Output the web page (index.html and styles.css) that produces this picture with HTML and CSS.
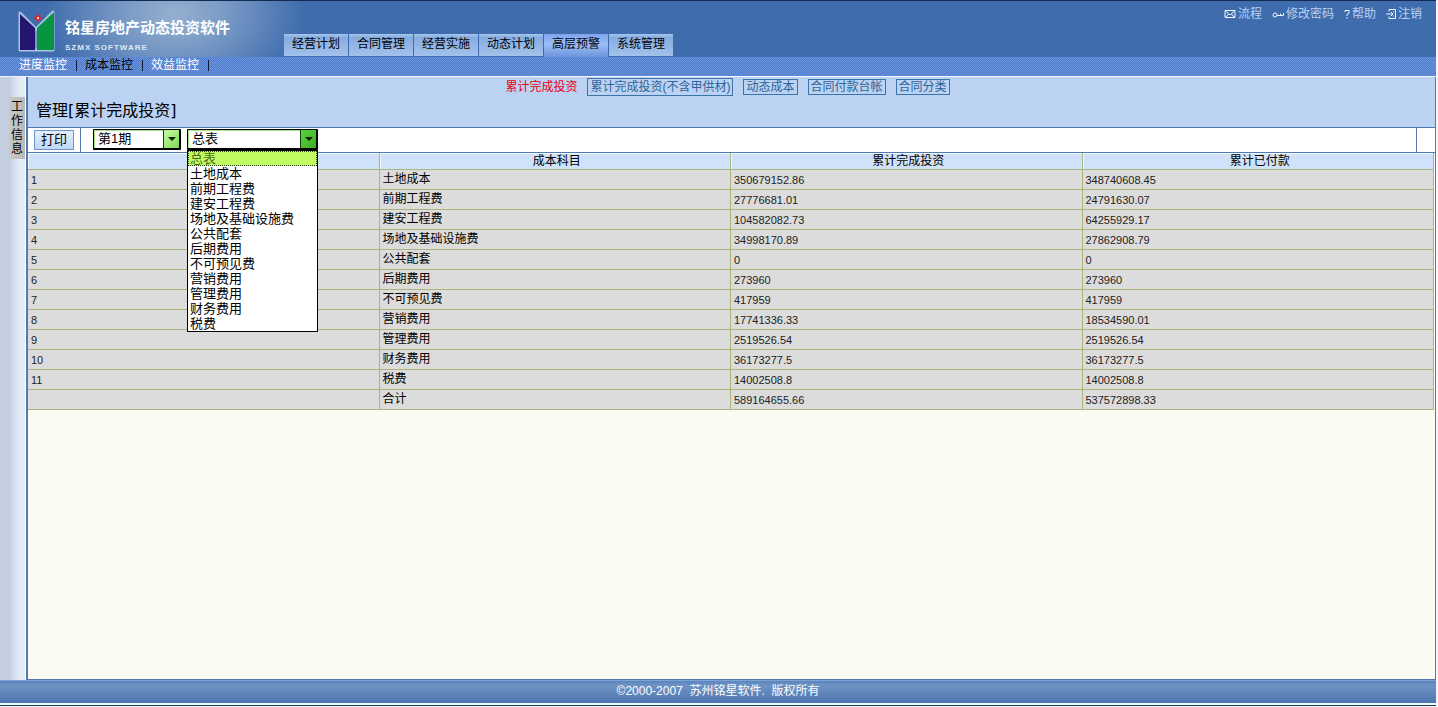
FILE: index.html
```html
<!DOCTYPE html>
<html lang="zh-CN">
<head>
<meta charset="utf-8">
<title>铭星房地产动态投资软件</title>
<link rel="stylesheet" href="styles.css">
</head>
<body>
<div class="page">
  <header class="header">
    <div class="brand">
      <svg class="logo" viewBox="0 0 42 44" aria-hidden="true">
        <path class="logo-glow" d="M4 5 20 21 37 4V42H4Z"/>
        <path fill="#26156f" d="M4 6 19 20V42H4Z"/>
        <path fill="#079541" d="M38 4V42H21V20Z"/>
        <path stroke="#a9c4e6" stroke-width="1" d="M20 20V42"/>
        <path fill="#e5202a" d="M22 5 23.500 8.500 27 10 23.500 11.500 22 15 20.500 11.500 17 10 20.500 8.500Z"/>
        <circle cx="22" cy="10" r="1" fill="#fff"/>
      </svg>
      <div class="brand-text">
        <h1 class="brand-name">铭星房地产动态投资软件</h1>
        <p class="brand-sub">SZMX SOFTWARE</p>
      </div>
    </div>
    <nav class="tabs">
      <a class="tab" href="#">经营计划</a>
      <a class="tab" href="#">合同管理</a>
      <a class="tab" href="#">经营实施</a>
      <a class="tab" href="#">动态计划</a>
      <a class="tab tab-active" href="#">高层预警</a>
      <a class="tab" href="#">系统管理</a>
    </nav>
    <div class="tools">
      <a class="tool" href="#"><svg class="icon" viewBox="0 0 12 10"><path d="M1 1.500H11V8.500H1ZM1.500 2 6 6 10.500 2M1.500 8.500 4.500 5M10.500 8.500 7.500 5"/></svg>流程</a>
      <a class="tool" href="#"><svg class="icon" viewBox="0 0 12 10"><path d="M1 6a2 2 0 1 0 4 0a2 2 0 1 0-4 0M5 6.500H11.500V4M8.500 6.500V4.500"/></svg>修改密码</a>
      <a class="tool" href="#"><svg class="icon icon-narrow" viewBox="0 0 6 10"><path d="M1 3V1.500H5V4L3 5.500V7M3 8V9.500"/></svg>帮助</a>
      <a class="tool" href="#"><svg class="icon icon-mid" viewBox="0 0 10 10"><path d="M3 2.500V.5H9.500V9.500H3V7.500M0 5H7M5 3 7 5 5 7M7.500 2.500V3.500M7.500 6.500V7.500"/></svg>注销</a>
    </div>
  </header>
  <nav class="subnav">
    <a class="subnav-link" href="#">进度监控</a>
    <a class="subnav-link subnav-active" href="#">成本监控</a>
    <a class="subnav-link" href="#">效益监控</a>
  </nav>
  <div class="body">
    <aside class="side"><button class="side-tab" type="button">工作信息</button></aside>
    <main class="main">
      <div class="heading">
        <nav class="views">
          <a class="view view-active" href="#">累计完成投资</a>
          <a class="view view-tall" href="#">累计完成投资(不含甲供材)</a>
          <a class="view" href="#">动态成本</a>
          <a class="view" href="#">合同付款台帐</a>
          <a class="view" href="#">合同分类</a>
        </nav>
        <h2 class="title">管理[累计完成投资]</h2>
      </div>
      <div class="toolbar">
        <div class="print-cell"><button class="print" type="button">打印</button></div>
        <div class="filters">
          <div class="combo combo-period">
            <select class="combo-select" aria-label="期次"><option>第1期</option></select>
            <span class="arrow"></span>
          </div>
          <div class="combo combo-subject">
            <select class="combo-select" aria-label="报表"><option>总表</option></select>
            <span class="arrow arrow-open"></span>
            <select class="list" size="12" aria-label="报表选项">
              <option selected>总表</option>
              <option>土地成本</option>
              <option>前期工程费</option>
              <option>建安工程费</option>
              <option>场地及基础设施费</option>
              <option>公共配套</option>
              <option>后期费用</option>
              <option>不可预见费</option>
              <option>营销费用</option>
              <option>管理费用</option>
              <option>财务费用</option>
              <option>税费</option>
            </select>
          </div>
        </div>
        <div class="toolbar-end"></div>
      </div>
      <table class="grid">
        <thead>
          <tr><th></th><th>成本科目</th><th>累计完成投资</th><th>累计已付款</th></tr>
        </thead>
        <tbody>
          <tr><td class="num">1</td><td>土地成本</td><td class="num">350679152.86</td><td class="num">348740608.45</td></tr>
          <tr><td class="num">2</td><td>前期工程费</td><td class="num">27776681.01</td><td class="num">24791630.07</td></tr>
          <tr><td class="num">3</td><td>建安工程费</td><td class="num">104582082.73</td><td class="num">64255929.17</td></tr>
          <tr><td class="num">4</td><td>场地及基础设施费</td><td class="num">34998170.89</td><td class="num">27862908.79</td></tr>
          <tr><td class="num">5</td><td>公共配套</td><td class="num">0</td><td class="num">0</td></tr>
          <tr><td class="num">6</td><td>后期费用</td><td class="num">273960</td><td class="num">273960</td></tr>
          <tr><td class="num">7</td><td>不可预见费</td><td class="num">417959</td><td class="num">417959</td></tr>
          <tr><td class="num">8</td><td>营销费用</td><td class="num">17741336.33</td><td class="num">18534590.01</td></tr>
          <tr><td class="num">9</td><td>管理费用</td><td class="num">2519526.54</td><td class="num">2519526.54</td></tr>
          <tr><td class="num">10</td><td>财务费用</td><td class="num">36173277.5</td><td class="num">36173277.5</td></tr>
          <tr><td class="num">11</td><td>税费</td><td class="num">14002508.8</td><td class="num">14002508.8</td></tr>
          <tr><td class="num"></td><td>合计</td><td class="num">589164655.66</td><td class="num">537572898.33</td></tr>
        </tbody>
      </table>
    </main>
  </div>
  <footer class="footer">©2000-2007&nbsp; 苏州铭星软件.&nbsp; 版权所有</footer>
</div>
</body>
</html>
```
FILE: styles.css
```css
* { box-sizing: border-box; }
body {
  margin: 0;
  background: #f4f8fc;
  color: #000;
  font: 12px/16px "Liberation Sans", "Noto Sans CJK SC", sans-serif;
}
a { color: inherit; text-decoration: none; }
h1, h2, p { margin: 0; }
button, select { font: inherit; color: inherit; }

.page {
  display: flex;
  flex-direction: column;
  min-height: 100vh;
  padding: 0 2px 1px 0;
}

/* Header */
.header {
  display: flex;
  align-items: stretch;
  height: 57px;
  border-top: 1px solid #122c50;
  background:
    radial-gradient(ellipse 130px 90px at 175px 12px, #94afd0 0%, #7d9dc7 35%, rgba(63, 108, 173, 0) 100%),
    #3f6cad;
}
.brand {
  display: flex;
  width: 284px;
  padding: 6px 0 0 16px;
  gap: 7px;
}
.logo { width: 42px; height: 46px; }
.logo-glow { fill: none; stroke: #a9c4e6; stroke-width: 3; stroke-linejoin: round; }
.brand-text { padding-top: 10px; color: #fff; }
.brand-name { font-size: 15px; line-height: 22px; white-space: nowrap; }
.brand-sub { padding-top: 4px; font-size: 8px; line-height: 10px; font-weight: bold; letter-spacing: 1px; color: #dce8f6; }
.tabs { display: flex; align-items: flex-end; flex: 1; }
.tab {
  width: 65px;
  height: 22px;
  margin-bottom: 1px;
  border-right: 1px solid #3c6aae;
  background: linear-gradient(#a9c8ec 0, #86ace0 15%, #a3c1ea 100%);
  line-height: 20px;
  text-align: center;
}
.tab-active {
  height: 23px;
  margin-bottom: 0;
  background: linear-gradient(#7fa5ee, #9bbcf6 45%, #6d95dc);
}
.tools {
  display: flex;
  gap: 10px;
  padding: 5px 14px 0 0;
  color: #b9d2f4;
}
.tool { display: flex; align-items: center; gap: 2px; height: 16px; }
.icon { width: 12px; height: 10px; fill: none; stroke: #f2f8ff; stroke-width: 1; }
.icon-narrow { width: 6px; }
.icon-mid { width: 10px; }

.subnav {
  display: flex;
  height: 20px;
  padding-left: 11px;
  border-bottom: 1px solid #f1f6fd;
  background:
    conic-gradient(#6a93d9 25%, #4f7ccd 0 50%, #6a93d9 0 75%, #4f7ccd 0) 0 0 / 2px 2px;
  color: #fff;
}
.subnav-link { position: relative; padding: 0 10px 0 8px; }
.subnav-link::after {
  content: "";
  position: absolute;
  right: 0;
  top: 3px;
  height: 11px;
  border-right: 1px solid #0b1a38;
}
.subnav-active { color: #000; }

/* Work area */
.body { display: flex; flex: 1; }
.side {
  width: 26px;
  padding: 20px 0 0 9px;
  border-right: 1px solid #fff;
  background: linear-gradient(90deg, #c3cee1 0 9px, #dfe9f5 18px, #e6eef8);
}
.side-tab {
  width: 16px;
  height: 62px;
  padding: 0 2px;
  border: 0;
  background: linear-gradient(90deg, #c9c9c9, #b9b9b9);
  line-height: 14px;
  white-space: normal;
}
.main {
  flex: 1;
  min-width: 0;
  border: solid #5079b0;
  border-width: 0 1px 1px 2px;
  background: #fafbf3;
}
.heading { height: 50px; background: #bbd2f2; }
.views {
  display: flex;
  align-items: center;
  justify-content: center;
  gap: 10px;
  height: 20px;
  padding-right: 8px;
}
.view {
  padding: 0 2px;
  border: 1px solid #3b74ab;
  line-height: 14px;
  color: #2d6499;
}
.view-tall { line-height: 16px; }
.view-active { padding: 0; border-color: transparent; border-width: 1px 0; color: #e8000c; }
.title {
  padding-left: 8px;
  font: 16px/28px "DejaVu Sans", "Noto Sans CJK SC", sans-serif;
}

.toolbar {
  display: flex;
  height: 26px;
  border: solid #5079b0;
  border-width: 1px 0;
  background: #fff;
  font-size: 13px;
}
.print-cell { width: 53px; padding: 2px 0 0 6px; border-right: 1px solid #5079b0; }
.print {
  width: 40px;
  height: 20px;
  padding: 0;
  border: 1px solid #6f95c8;
  background: linear-gradient(#e3effd, #bfd9f7);
  line-height: 16px;
}
.filters { display: flex; flex: 1; gap: 6px; padding: 1px 0 0 12px; }
.combo { position: relative; height: 21px; }
.combo-period { width: 88px; }
.combo-subject { width: 131px; }
.combo-select {
  width: 100%;
  height: 21px;
  padding: 0 20px 0 4px;
  border: solid #000;
  border-width: 1px 2px 2px 1px;
  border-radius: 1px;
  background: #fff;
  box-shadow: inset 1px 1px #a7e389;
  line-height: 16px;
  appearance: none;
}
.arrow {
  position: absolute;
  top: 1px;
  right: 2px;
  width: 16px;
  height: 18px;
  border-left: 1px solid #143b0a;
  background: linear-gradient(135deg, #c4fca0, #7ed956);
  pointer-events: none;
}
.arrow::after {
  content: "";
  position: absolute;
  top: 7px;
  left: 4px;
  border: solid transparent;
  border-width: 4px 4px 0;
  border-top-color: #0a1f05;
}
.arrow-open { background: linear-gradient(135deg, #58d43c, #3fae25); }
.list {
  position: absolute;
  top: 21px;
  left: 0;
  z-index: 2;
  width: 131px;
  height: 182px;
  padding: 0;
  border: 1px solid #000;
  border-radius: 0;
  background: #fff;
  overflow: hidden;
  outline: 0;
}
.list option {
  display: flex;
  align-items: center;
  height: 15px;
  min-height: 15px;
  padding: 0 0 3px 2px;
}
.list option:checked {
  border: 1px dotted #2d4a10;
  padding: 0 0 2px 1px;
  background: linear-gradient(#c1fb62, #c1fb62);
  color: #4b6b20;
  -webkit-text-fill-color: #4b6b20;
}
.toolbar-end { width: 19px; border-left: 1px solid #5079b0; }

.grid {
  width: calc(100% - 1px);
  table-layout: fixed;
  border-collapse: separate;
  border-spacing: 0;
}
.grid th {
  height: 17px;
  padding: 0 0 0 4px;
  border: solid #a9b57c;
  border-width: 0 1px 1px 0;
  background: #cfe2f9;
  box-shadow: inset 1px 1px #f3f8fe;
  line-height: 16px;
  font-weight: normal;
}
.grid td {
  height: 20px;
  padding: 0 3px 2px;
  border: solid #a9b57c;
  border-width: 0 1px 1px 0;
  background: #dcdcdc;
  line-height: 16px;
}
.grid .num { padding: 0 3px; font-size: 11px; color: #222; }

.footer {
  height: 26px;
  padding-top: 1px;
  border-top: 1px solid #7ba3d3;
  border-bottom: 1px solid #17404e;
  background: linear-gradient(#5c84bf, #6f93c2 20%, #4c75b1) no-repeat 0 0 / 100% 22px #f1fbfd;
  line-height: 18px;
  text-align: center;
  color: #fff;
}
```
